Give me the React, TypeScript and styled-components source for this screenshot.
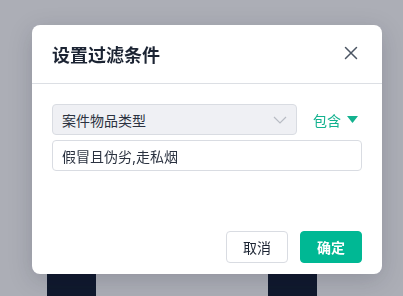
import React, { useState } from "react";
import styled, { createGlobalStyle } from "styled-components";

const GlobalStyle = createGlobalStyle`
  html, body {
    margin: 0;
    padding: 0;
    width: 403px;
    height: 296px;
    overflow: hidden;
    font-family: Inter, "Noto Sans CJK SC", sans-serif;
  }
`;

const App = () => {
  const [keyword, setKeyword] = useState("假冒且伪劣,走私烟");
  return (
    <>
      <GlobalStyle />
      <Page>
        <Columns>
          <Pillar />
          <Pillar />
        </Columns>
      </Page>
      <Overlay>
        <Modal>
          <Header>
            <Title>设置过滤条件</Title>
            <CloseButton aria-label="关闭">
              <svg width="14" height="14" viewBox="0 0 14 14">
                <path
                  d="M1.5 1.5 L12.5 12.5 M12.5 1.5 L1.5 12.5"
                  stroke="#4b5563"
                  strokeWidth="1.5"
                  strokeLinecap="round"
                />
              </svg>
            </CloseButton>
          </Header>
          <Body>
            <Row>
              <Select>
                <span>案件物品类型</span>
                <svg width="14" height="8" viewBox="0 0 14 8">
                  <path
                    d="M1 1 L7 7 L13 1"
                    stroke="#b8bcc4"
                    strokeWidth="1.2"
                    fill="none"
                  />
                </svg>
              </Select>
              <Operator>
                包含
                <svg width="11" height="7" viewBox="0 0 11 7">
                  <path d="M0 0 H11 L5.5 7 Z" fill="#13b28f" />
                </svg>
              </Operator>
            </Row>
            <Input value={keyword} onChange={(e) => setKeyword(e.target.value)} />
          </Body>
          <Footer>
            <Button>取消</Button>
            <Button primary>确定</Button>
          </Footer>
        </Modal>
      </Overlay>
    </>
  );
};

export default App;

const Page = styled.div`
  width: 403px;
  height: 296px;
  background: #ffffff;
  display: flex;
  align-items: flex-end;
`;

const Columns = styled.div`
  display: flex;
  gap: 172px;
  padding-left: 47px;
`;

const Pillar = styled.div`
  width: 49px;
  height: 60px;
  background: #000c20;
`;

const Overlay = styled.div`
  position: fixed;
  inset: 0;
  background: rgba(40, 47, 68, 0.39);
  padding: 25px 0 0 32px;
  box-sizing: border-box;
`;

const Modal = styled.div`
  width: 350px;
  height: 249px;
  background: #ffffff;
  border-radius: 8px;
  box-shadow: 0 6px 24px rgba(15, 23, 42, 0.18);
  display: flex;
  flex-direction: column;
  box-sizing: border-box;
`;

const Header = styled.div`
  height: 58px;
  padding: 0 24px 0 20px;
  display: flex;
  align-items: center;
  justify-content: space-between;
  border-bottom: 1px solid #dcdfe4;
`;

const Title = styled.h2`
  margin: 0;
  font-size: 18px;
  font-weight: 700;
  color: #1c2433;
`;

const CloseButton = styled.button`
  border: none;
  background: none;
  padding: 0;
  display: flex;
  margin-top: -2px;
`;

const Body = styled.div`
  flex: 1;
  padding: 20px 20px 0;
  display: flex;
  flex-direction: column;
  gap: 5px;
`;

const Row = styled.div`
  display: flex;
  align-items: center;
  gap: 16px;
`;

const Select = styled.div`
  width: 245px;
  height: 31px;
  box-sizing: border-box;
  border: 1px solid #d9dce2;
  border-radius: 4px;
  background: #eff0f4;
  display: flex;
  align-items: center;
  justify-content: space-between;
  padding: 0 9px 0 9px;
  font-size: 14px;
  color: #2b3240;
`;

const Operator = styled.div`
  display: flex;
  align-items: center;
  gap: 6px;
  font-size: 14px;
  color: #13b28f;
`;

const Input = styled.input`
  width: 310px;
  height: 31px;
  box-sizing: border-box;
  border: 1px solid #d9dce2;
  border-radius: 4px;
  padding: 0 9px;
  font-family: Inter, "Noto Sans CJK SC", sans-serif;
  font-size: 14px;
  color: #2b3240;
  outline: none;
`;

const Footer = styled.div`
  display: flex;
  justify-content: flex-end;
  gap: 12px;
  padding: 0 20px 11px;
`;

const Button = styled.button<{ primary?: boolean }>`
  width: 62px;
  height: 32px;
  border-radius: 4px;
  font-family: Inter, "Noto Sans CJK SC", sans-serif;
  font-size: 14px;
  font-weight: ${(p) => (p.primary ? 600 : 400)};
  border: 1px solid ${(p) => (p.primary ? "#00b894" : "#d9dce2")};
  background: ${(p) => (p.primary ? "#00b894" : "#ffffff")};
  color: ${(p) => (p.primary ? "#ffffff" : "#1c2433")};
`;
